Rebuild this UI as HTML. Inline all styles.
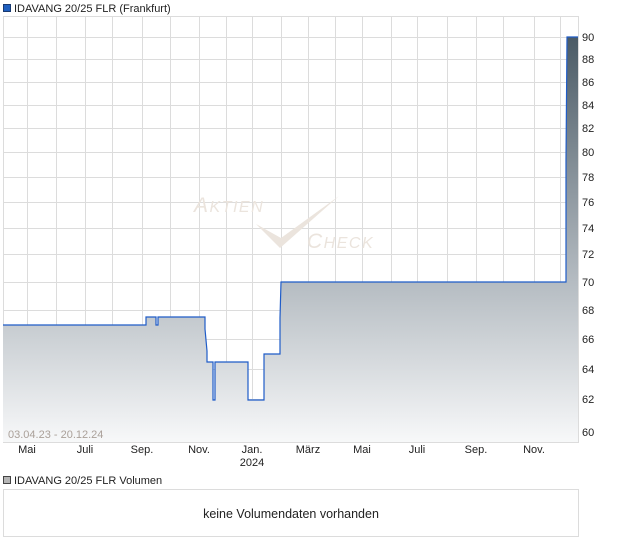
<!DOCTYPE html>
<html><head><meta charset="utf-8"><style>
html,body{margin:0;padding:0;background:#fff;width:620px;height:546px;overflow:hidden}
svg{display:block}
text{font-family:"Liberation Sans",sans-serif;font-size:11px;fill:#222}
</style></head><body>
<svg width="620" height="546" viewBox="0 0 620 546" xmlns="http://www.w3.org/2000/svg">
<defs>
<linearGradient id="g" gradientUnits="userSpaceOnUse" x1="0" y1="37" x2="0" y2="442">
<stop offset="0" stop-color="#4b5b66"/>
<stop offset="0.6" stop-color="#b4bbc1"/>
<stop offset="1" stop-color="#f7f8f9"/>
</linearGradient>
</defs>
<rect x="3.5" y="4.5" width="7" height="7" fill="#1f5fbf" stroke="#1a3a70"/>
<text x="14" y="12">IDAVANG 20/25 FLR (Frankfurt)</text>
<g stroke="#dcdcdc" stroke-width="1">
<path d="M27.5,16V442M56.5,16V442M85.5,16V442M112.5,16V442M142.5,16V442M170.5,16V442M199.5,16V442M226.5,16V442M252.5,16V442M281.5,16V442M308.5,16V442M335.5,16V442M362.5,16V442M391.5,16V442M417.5,16V442M447.5,16V442M476.5,16V442M503.5,16V442M534.5,16V442M560.5,16V442"/>
<path d="M3,37.5H579M3,59.5H579M3,82.5H579M3,105.5H579M3,128.5H579M3,152.5H579M3,177.5H579M3,202.5H579M3,228.5H579M3,254.5H579M3,282.5H579M3,310.5H579M3,339.5H579M3,369.5H579M3,399.5H579M3,432.5H579"/>
<rect x="3.5" y="16.5" width="575" height="426" fill="none"/>
</g>
<g>
<text x="194" y="212" style="font-size:21px;font-style:italic;fill:#ebe4dd;letter-spacing:1.5px">A<tspan style="font-size:16px">KTIEN</tspan></text>
<text x="307" y="248" style="font-size:21px;font-style:italic;fill:#ebe4dd;letter-spacing:1.5px">C<tspan style="font-size:16px">HECK</tspan></text>
<path d="M256,224 L280,248 L339,196 L281,238 Z" fill="#ebe4dd"/>
</g>
<path d="M3,325H146V317H156V325H158V317H205V329L207,351V362H213V400H215V362H248V400H264V354H280V318L281,282H566V160L567,37H578V442H3Z" fill="url(#g)"/>
<path d="M3,325H146V317H156V325H158V317H205V329L207,351V362H213V400H215V362H248V400H264V354H280V318L281,282H566V160L567,37H578" fill="none" stroke="#1f5cc8" stroke-width="1.2"/>
<g>
<text x="582" y="41">90</text><text x="582" y="63">88</text><text x="582" y="86">86</text><text x="582" y="109">84</text><text x="582" y="132">82</text><text x="582" y="156">80</text><text x="582" y="181">78</text><text x="582" y="206">76</text><text x="582" y="232">74</text><text x="582" y="258">72</text><text x="582" y="286">70</text><text x="582" y="314">68</text><text x="582" y="343">66</text><text x="582" y="373">64</text><text x="582" y="403">62</text><text x="582" y="436">60</text>
</g>
<text x="8" y="438" style="fill:#aaa099">03.04.23 - 20.12.24</text>
<g text-anchor="middle">
<text x="27" y="453">Mai</text><text x="85" y="453">Juli</text><text x="142" y="453">Sep.</text><text x="199" y="453">Nov.</text><text x="252" y="453">Jan.</text><text x="252" y="466">2024</text><text x="308" y="453">März</text><text x="362" y="453">Mai</text><text x="417" y="453">Juli</text><text x="476" y="453">Sep.</text><text x="534" y="453">Nov.</text>
</g>
<rect x="3.5" y="476.5" width="7" height="7" fill="#b5b5b5" stroke="#444"/>
<text x="14" y="484">IDAVANG 20/25 FLR Volumen</text>
<rect x="3.5" y="489.5" width="575" height="47" fill="#fff" stroke="#dcdcdc"/>
<text x="291" y="518" text-anchor="middle" style="font-size:12.5px">keine Volumendaten vorhanden</text>
</svg>
</body></html>
